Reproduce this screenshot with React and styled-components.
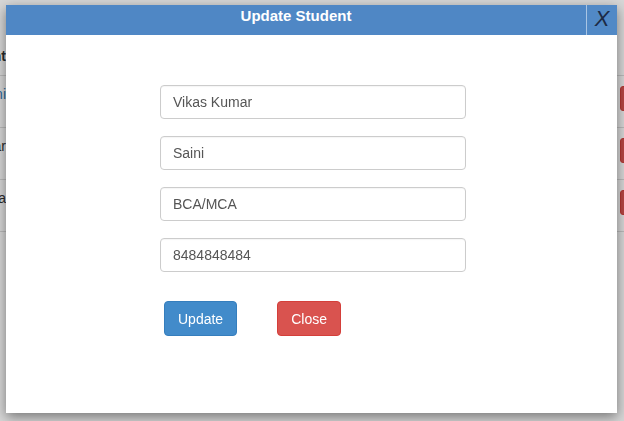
import React from "react";
import styled, { createGlobalStyle } from "styled-components";

const GlobalStyle = createGlobalStyle`
  html, body {
    margin: 0;
    padding: 0;
    background: #fff;
    font-family: "Liberation Sans", Arial, sans-serif;
    font-size: 14px;
    color: #333;
    overflow: hidden;
  }
`;

const Page = styled.div`
  width: 760px;
  margin-left: -60px;
  padding-top: 38px;
`;

const Row = styled.div`
  display: grid;
  grid-template-columns: 66px 614px 80px;
  min-height: ${(p) => (p.head ? "37px" : "51px")};
  border-bottom: 1px solid #ddd;
`;

const Cell = styled.div`
  padding: 8px 0;
  line-height: 20px;
  text-align: right;
  font-weight: ${(p) => (p.head ? "bold" : "normal")};
  color: ${(p) => (p.link ? "#337ab7" : "#333")};
`;

const DeleteBtn = styled.div`
  margin-top: 10px;
  width: 60px;
  height: 25px;
  border-radius: 3px;
  background: #d9534f;
  border: 1px solid #d43f3a;
  box-sizing: border-box;
`;

const Overlay = styled.div`
  position: fixed;
  inset: 0;
  background: rgba(0, 0, 0, 0.16);
  display: flex;
  padding: 5px 7px 8px 6px;
  box-sizing: border-box;
`;

const Modal = styled.div`
  flex: 1;
  display: flex;
  flex-direction: column;
  background: #fff;
  box-shadow: 0 4px 12px rgba(0, 0, 0, 0.45);
`;

const Header = styled.div`
  display: flex;
  height: 30px;
  background: #4f87c5;
`;

const Title = styled.div`
  flex: 1;
  text-align: center;
  color: #fff;
  font-weight: bold;
  font-size: 15px;
  line-height: 22px;
`;

const CloseX = styled.div`
  width: 30px;
  border-left: 1px solid #a9c5e4;
  background: #5189c6;
  color: #1c2a45;
  font-style: italic;
  font-size: 22px;
  line-height: 28px;
  text-align: center;
`;

const Body = styled.div`
  padding: 50px 0 0 154px;
  display: flex;
  flex-direction: column;
  gap: 17px;
`;

const Input = styled.input`
  width: 306px;
  height: 34px;
  box-sizing: border-box;
  border: 1px solid #ccc;
  border-radius: 4px;
  padding: 0 12px;
  font-family: "Liberation Sans", Arial, sans-serif;
  font-size: 14px;
  color: #555;
  box-shadow: inset 0 1px 1px rgba(0, 0, 0, 0.04);
  outline: none;
`;

const Actions = styled.div`
  display: flex;
  gap: 40px;
  padding-left: 4px;
  margin-top: 12px;
`;

const Button = styled.button`
  height: 35px;
  padding: 0 ${(p) => p.pad}px;
  border-radius: 4px;
  border: 1px solid ${(p) => p.border};
  background: ${(p) => p.bg};
  color: #fff;
  font-family: "Liberation Sans", Arial, sans-serif;
  font-size: 14px;
`;

const rows = [
  { name: "Saini", link: true },
  { name: "Kumar" },
  { name: "Verma" },
];

export default function App() {
  return (
    <>
      <GlobalStyle />
      <Page>
        <Row head>
          <Cell head>Student</Cell>
          <div />
          <div />
        </Row>
        {rows.map((r) => (
          <Row key={r.name}>
            <Cell link={r.link}>{r.name}</Cell>
            <div />
            <DeleteBtn />
          </Row>
        ))}
      </Page>
      <Overlay>
        <Modal>
          <Header>
            <Title>Update Student</Title>
            <CloseX>X</CloseX>
          </Header>
          <Body>
            <Input defaultValue="Vikas Kumar" />
            <Input defaultValue="Saini" />
            <Input defaultValue="BCA/MCA" />
            <Input defaultValue="8484848484" />
            <Actions>
              <Button bg="#428bca" border="#357ebd" pad={13}>
                Update
              </Button>
              <Button bg="#d9534f" border="#d43f3a" pad={13}>
                Close
              </Button>
            </Actions>
          </Body>
        </Modal>
      </Overlay>
    </>
  );
}
